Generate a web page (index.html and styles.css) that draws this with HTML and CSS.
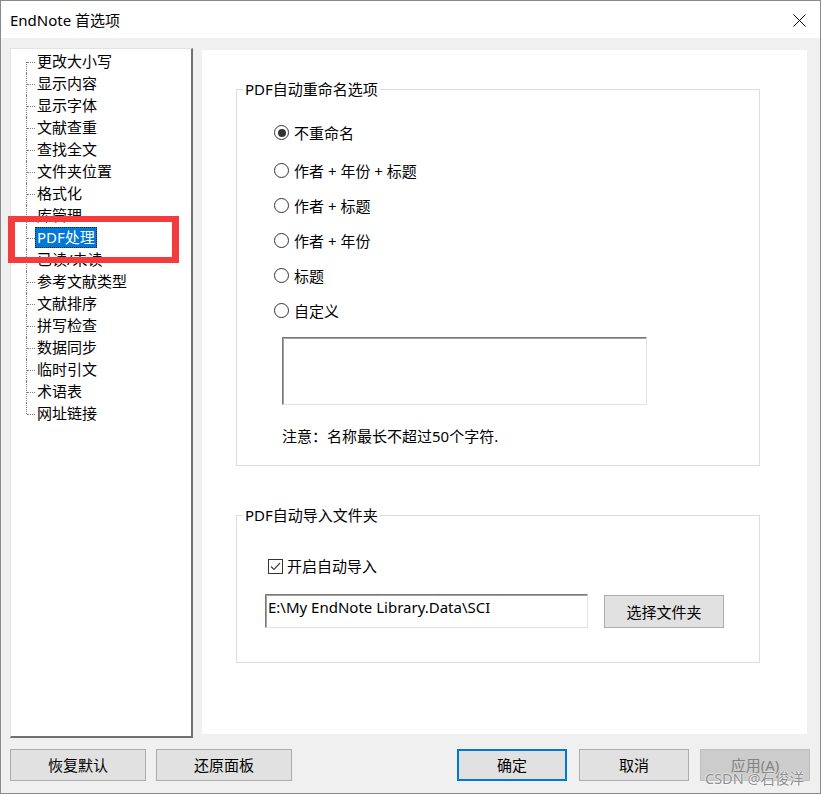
FILE: index.html
```html
<!DOCTYPE html>
<html lang="zh-CN">
<head>
<meta charset="utf-8">
<title>EndNote 首选项</title>
<link rel="stylesheet" href="styles.css">
</head>
<body>
<div class="window">
  <div class="titlebar">
    <span class="title">EndNote 首选项</span>
    <svg class="close" width="13" height="13" viewBox="0 0 13 13"><path d="M0.5 0.5 L12.5 12.5 M12.5 0.5 L0.5 12.5" stroke="#000" stroke-width="1" fill="none"/></svg>
  </div>
  <div class="main">
    <div class="tree">
      <ul>
        <li><span>更改大小写</span></li>
        <li><span>显示内容</span></li>
        <li><span>显示字体</span></li>
        <li><span>文献查重</span></li>
        <li><span>查找全文</span></li>
        <li><span>文件夹位置</span></li>
        <li><span>格式化</span></li>
        <li><span>库管理</span></li>
        <li class="sel"><span>PDF处理</span></li>
        <li><span>已读/未读</span></li>
        <li><span>参考文献类型</span></li>
        <li><span>文献排序</span></li>
        <li><span>拼写检查</span></li>
        <li><span>数据同步</span></li>
        <li><span>临时引文</span></li>
        <li><span>术语表</span></li>
        <li><span>网址链接</span></li>
      </ul>
    </div>
    <div class="panel">
      <fieldset class="group g1">
        <legend>PDF自动重命名选项</legend>
        <div class="groupbody">
          <div class="radios">
            <label class="radio first"><span class="circle on"></span>不重命名</label>
            <label class="radio"><span class="circle"></span>作者 + 年份 + 标题</label>
            <label class="radio"><span class="circle"></span>作者 + 标题</label>
            <label class="radio"><span class="circle"></span>作者 + 年份</label>
            <label class="radio"><span class="circle"></span>标题</label>
            <label class="radio"><span class="circle"></span>自定义</label>
          </div>
          <div class="textbox"></div>
          <p class="note">注意：名称最长不超过50个字符.</p>
        </div>
      </fieldset>
      <fieldset class="group g2">
        <legend>PDF自动导入文件夹</legend>
        <div class="groupbody">
          <label class="check"><span class="box"><svg width="13" height="13" viewBox="0 0 13 13"><path d="M2 6.5 L5 9.5 L11 3" stroke="#444" stroke-width="1.2" fill="none"/></svg></span>开启自动导入</label>
          <div class="pathrow">
            <div class="input">E:\My EndNote Library.Data\SCI</div>
            <button class="btn choose">选择文件夹</button>
          </div>
        </div>
      </fieldset>
    </div>
  </div>
  <div class="footer">
    <div class="btngroup left">
      <button class="btn wide">恢复默认</button>
      <button class="btn wide">还原面板</button>
    </div>
    <div class="btngroup right">
      <button class="btn narrow primary">确定</button>
      <button class="btn narrow">取消</button>
      <button class="btn narrow disabled">应用(A)</button>
    </div>
  </div>
  <div class="redbox"></div>
  <div class="watermark">CSDN @石俊洋</div>
</div>
</body>
</html>
```
FILE: styles.css
```css
* { box-sizing: border-box; }
html, body { margin: 0; padding: 0; }
body {
  font-family: "Noto Sans", "Noto Sans CJK SC", sans-serif;
  font-size: 15px;
  color: #000;
  background: #fff;
}
.window {
  position: relative;
  width: 821px;
  height: 794px;
  border: 1px solid #8a8a8a;
  background: #f0f0f0;
  display: flex;
  flex-direction: column;
}
.titlebar {
  height: 37px;
  flex: none;
  background: #fff;
  display: flex;
  align-items: center;
  justify-content: space-between;
  padding: 0 14px 0 9px;
}
.title { font-size: 15px; line-height: 20px; }
.close { display: block; margin-top: 1px; }

.main {
  display: flex;
  align-items: flex-start;
  gap: 9px;
  padding: 10px 13px 0 9px;
}
.tree {
  width: 183px;
  height: 690px;
  flex: none;
  background: #fff;
  border-top: 1px solid #e3e3e3;
  border-left: 1px solid #e3e3e3;
  border-right: 2px solid #707070;
  border-bottom: 2px solid #707070;
}
.tree ul { list-style: none; margin: 0; padding: 2px 0 0 0; }
.tree li {
  position: relative;
  height: 22px;
  line-height: 21px;
  padding-left: 24px;
}
.tree li::before {
  content: "";
  position: absolute;
  left: 15px;
  top: 0;
  bottom: 0;
  border-left: 1px dotted #808080;
}
.tree li:first-child::before { top: 11px; }
.tree li:last-child::before { bottom: 11px; }
.tree li::after {
  content: "";
  position: absolute;
  left: 16px;
  top: 11px;
  width: 8px;
  border-top: 1px dotted #808080;
}
.tree li span {
  display: inline-block;
  height: 21px;
  line-height: 21px;
  padding: 0 2px;
  white-space: nowrap;
}
.tree li.sel span {
  background: #0078d7;
  color: #fff;
  outline: 1px dotted #222;
  outline-offset: -1px;
}

.panel {
  width: 605px;
  height: 684px;
  flex: none;
  margin-top: 2px;
  background: #fff;
  padding: 29px 0 0 34px;
}
.group {
  width: 524px;
  min-width: 0;
  margin: 0;
  padding: 0;
  border: 1px solid #dcdcdc;
}
.group legend {
  margin-left: 6px;
  padding: 0 2px;
  line-height: 20px;
  font-size: 15px;
}
.g1 .groupbody { padding: 16px 0 19px 37px; }
.radios { display: flex; flex-direction: column; }
.radio {
  height: 35px;
  display: flex;
  align-items: center;
  gap: 5px;
  line-height: 20px;
}
.radio.first { margin-bottom: 3px; }
.circle {
  width: 15px;
  height: 15px;
  border: 1px solid #333;
  border-radius: 50%;
  background: #fff;
  display: flex;
  align-items: center;
  justify-content: center;
}
.circle.on::after {
  content: "";
  width: 8px;
  height: 8px;
  border-radius: 50%;
  background: #333;
}
.textbox {
  margin: 9px 0 0 8px;
  width: 365px;
  height: 68px;
  background: #fff;
  border: 1px solid;
  border-color: #7a7a7a #e3e3e3 #e3e3e3 #7a7a7a;
  box-shadow: inset 1px 1px 0 #a0a0a0;
}
.note { margin: 21px 0 0 8px; line-height: 20px; }

.g2 { margin-top: 39px; }
.g2 .groupbody { padding: 31px 0 34px 28px; }
.check {
  height: 20px;
  display: flex;
  align-items: center;
  gap: 4px;
  margin-left: 3px;
  line-height: 20px;
}
.box {
  width: 15px;
  height: 15px;
  border: 1px solid #333;
  background: #fff;
  display: flex;
  align-items: center;
  justify-content: center;
}
.box svg { display: block; }
.pathrow {
  display: flex;
  align-items: flex-start;
  gap: 16px;
  margin-top: 18px;
}
.input {
  width: 323px;
  height: 34px;
  background: #fff;
  border: 1px solid;
  border-color: #7a7a7a #e3e3e3 #e3e3e3 #7a7a7a;
  box-shadow: inset 1px 1px 0 #a0a0a0;
  padding: 2px 0 0 2px;
  line-height: 20px;
  white-space: nowrap;
}

.btn {
  font-family: "Noto Sans", "Noto Sans CJK SC", sans-serif;
  font-size: 15px;
  color: #000;
  background: #e1e1e1;
  border: 1px solid #adadad;
  padding: 0;
  margin: 0;
  height: 32px;
  line-height: 20px;
}
.choose { width: 120px; height: 33px; margin-top: 1px; }

.footer {
  display: flex;
  justify-content: space-between;
  padding: 11px 10px 0 9px;
}
.btngroup { display: flex; }
.btngroup.left { gap: 10px; }
.btngroup.right { gap: 11px; }
.wide { width: 136px; }
.narrow { width: 110px; }
.primary { border: 2px solid #0078d7; margin-right: 1px; }
.disabled { background: #cccccc; border-color: #bfbfbf; color: #838383; }

.redbox {
  position: absolute;
  left: 7px;
  top: 215px;
  width: 171px;
  height: 47px;
  border: 7px solid #f53b3b;
  border-top-width: 6px;
  border-bottom-width: 6px;
}
.watermark {
  position: absolute;
  left: 704px;
  top: 767px;
  font-size: 14.5px;
  line-height: 20px;
  color: #8e8e8e;
  text-shadow: 0 0 1px #fff, 0 0 2px #fff;
  white-space: nowrap;
}
```
